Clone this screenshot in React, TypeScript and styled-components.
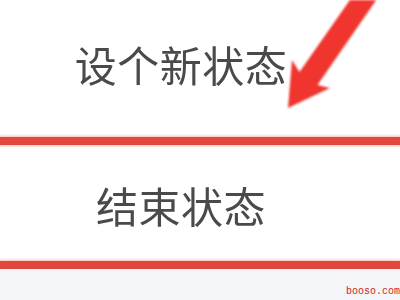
import React from "react";
import styled, { createGlobalStyle } from "styled-components";

const Global = createGlobalStyle`
  html, body { margin: 0; padding: 0; background: #ffffff; }
  body { width: 400px; height: 300px; overflow: hidden; }
`;

const Page = styled.div`
  position: relative;
  width: 400px;
  height: 300px;
  display: flex;
  flex-direction: column;
  background: #ffffff;
  overflow: hidden;
  font-family: "Noto Sans CJK SC", "Noto Sans", sans-serif;
`;

const Row = styled.div<{ $h: number; $pt?: number; $pb?: number }>`
  height: ${(p) => p.$h}px;
  flex: none;
  display: flex;
  align-items: center;
  justify-content: center;
  padding-right: 38px;
  padding-top: ${(p) => p.$pt ?? 0}px;
  padding-bottom: ${(p) => p.$pb ?? 0}px;
  box-sizing: border-box;
`;

const Label = styled.span`
  font-size: 42px;
  line-height: 1;
  color: #4a4a4a;
  letter-spacing: 0.5px;
  filter: blur(0.4px);
`;

const Divider = styled.div`
  height: 8px;
  flex: none;
  background: #e2463d;
  box-shadow: 0 0 3px 1px rgba(232, 90, 80, 0.45);
`;

const Footer = styled.div`
  flex: 1;
  background: #f4f5f8;
`;

const Arrow = styled.svg`
  position: absolute;
  left: 0;
  top: 0;
  width: 400px;
  height: 300px;
  pointer-events: none;
  filter: blur(0.8px);
`;

const Watermark = styled.span`
  position: absolute;
  right: 0;
  bottom: 3px;
  font-family: "Liberation Mono", monospace;
  font-size: 10px;
  line-height: 1;
  color: #cc1f1f;
`;

export default function App() {
  return (
    <Page>
      <Global />
      <Row $h={137} $pb={10}>
        <Label>设个新状态</Label>
      </Row>
      <Divider />
      <Row $h={116} $pt={4}>
        <Label>结束状态</Label>
      </Row>
      <Divider />
      <Footer />
      <Arrow viewBox="0 0 400 300">
        <polygon
          points="288,108 292,60 299.5,72 359,-13 377,-1 317.5,85 330,88"
          fill="#f0352e"
        />
      </Arrow>
      <Watermark>booso.com</Watermark>
    </Page>
  );
}
